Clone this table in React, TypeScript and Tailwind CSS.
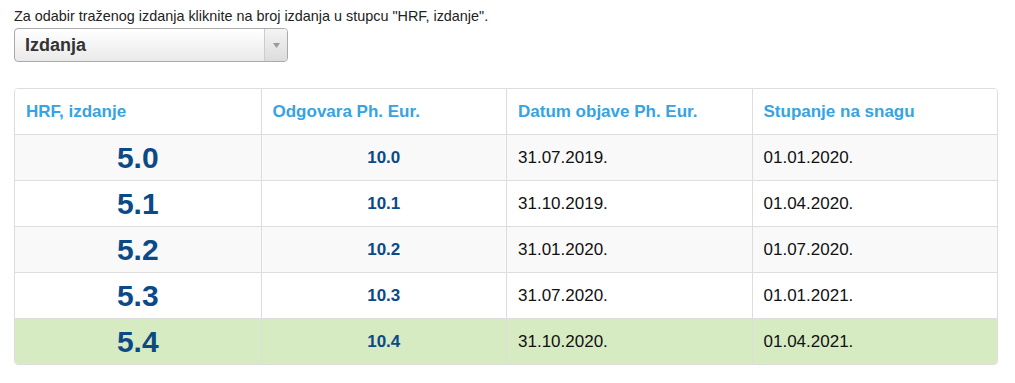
import React from "react";

const rows = [
  { hrf: "5.0", ph: "10.0", datum: "31.07.2019.", snaga: "01.01.2020.", bg: "bg-[#f9f9f9]" },
  { hrf: "5.1", ph: "10.1", datum: "31.10.2019.", snaga: "01.04.2020.", bg: "bg-white" },
  { hrf: "5.2", ph: "10.2", datum: "31.01.2020.", snaga: "01.07.2020.", bg: "bg-[#f9f9f9]" },
  { hrf: "5.3", ph: "10.3", datum: "31.07.2020.", snaga: "01.01.2021.", bg: "bg-white" },
  { hrf: "5.4", ph: "10.4", datum: "31.10.2020.", snaga: "01.04.2021.", bg: "bg-[#d6ebc1]" },
];

export default function App() {
  return (
    <div className="w-[1015px] h-[383px] bg-white pl-[14px] pt-[7px] font-['Liberation_Sans',Arial,sans-serif] text-[#222]">
      <p className="text-[14.4px] leading-[18px]">
        Za odabir traženog izdanja kliknite na broj izdanja u stupcu "HRF, izdanje".
      </p>
      <div className="mt-[3px] w-[274px] h-[34px] flex rounded-[4px] border border-[#aaaaaa] bg-gradient-to-b from-white to-[#eaeaea] overflow-hidden">
        <div className="flex-1 flex items-center pl-[10px] text-[18px] font-bold text-[#333]">Izdanja</div>
        <div className="w-[23px] flex items-center justify-center border-l border-[#cccccc] bg-gradient-to-b from-[#f4f4f4] to-[#dcdcdc]">
          <svg width="7" height="5" viewBox="0 0 7 5">
            <path d="M0 0 L7 0 L3.5 5 Z" fill="#9a9a9a" />
          </svg>
        </div>
      </div>
      <div className="mt-[26px] w-[984px] border border-[#dddddd] rounded-[4px] overflow-hidden">
        <div className="grid grid-cols-4 h-[45px] bg-white">
          {["HRF, izdanje", "Odgovara Ph. Eur.", "Datum objave Ph. Eur.", "Stupanje na snagu"].map((h, i) => (
            <div
              key={h}
              className={`flex items-center px-[11px] text-[17px] font-bold text-[#35a3e4] ${i > 0 ? "border-l border-[#dddddd]" : ""}`}
            >
              {h}
            </div>
          ))}
        </div>
        {rows.map((r) => (
          <div key={r.hrf} className={`grid grid-cols-4 h-[46px] border-t border-[#dddddd] ${r.bg}`}>
            <div className="flex items-center justify-center text-[30px] font-bold text-[#0b4a86]">{r.hrf}</div>
            <div className="flex items-center justify-center border-l border-[#dddddd] text-[17px] font-bold text-[#0b4a86]">{r.ph}</div>
            <div className="flex items-center px-[11px] border-l border-[#dddddd] text-[17px] text-[#111]">{r.datum}</div>
            <div className="flex items-center px-[11px] border-l border-[#dddddd] text-[17px] text-[#111]">{r.snaga}</div>
          </div>
        ))}
      </div>
    </div>
  );
}
